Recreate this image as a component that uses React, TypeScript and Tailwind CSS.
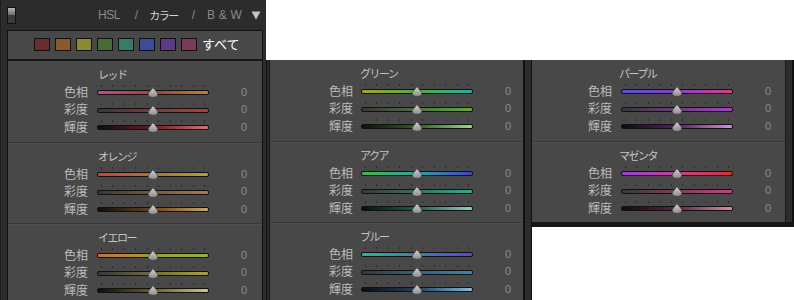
import React from "react";

type SliderDef = { label: string; grad: string };
type SectionDef = { name: string; sliders: SliderDef[] };

const S = {
  red: {
    name: "レッド",
    sliders: [
      { label: "色相", grad: "bg-[linear-gradient(90deg,#c24c92,#a83a40_50%,#b8862c)]" },
      { label: "彩度", grad: "bg-[linear-gradient(90deg,#383838,#b04040)]" },
      { label: "輝度", grad: "bg-[linear-gradient(90deg,#0e0e0e,#6e1c1c_50%,#d07474)]" },
    ],
  },
  orange: {
    name: "オレンジ",
    sliders: [
      { label: "色相", grad: "bg-[linear-gradient(90deg,#c44444,#b07232_50%,#a8a232)]" },
      { label: "彩度", grad: "bg-[linear-gradient(90deg,#383838,#b07a3a)]" },
      { label: "輝度", grad: "bg-[linear-gradient(90deg,#0e0e0e,#6a4418_50%,#cca474)]" },
    ],
  },
  yellow: {
    name: "イエロー",
    sliders: [
      { label: "色相", grad: "bg-[linear-gradient(90deg,#c47044,#a89a38_50%,#84b444)]" },
      { label: "彩度", grad: "bg-[linear-gradient(90deg,#383838,#a8a040)]" },
      { label: "輝度", grad: "bg-[linear-gradient(90deg,#0e0e0e,#6a6020_50%,#d0c880)]" },
    ],
  },
  green: {
    name: "グリーン",
    sliders: [
      { label: "色相", grad: "bg-[linear-gradient(90deg,#a4a232,#58a840_50%,#30aaa4)]" },
      { label: "彩度", grad: "bg-[linear-gradient(90deg,#383838,#62aa42)]" },
      { label: "輝度", grad: "bg-[linear-gradient(90deg,#0e0e0e,#2e6020_50%,#a4d484)]" },
    ],
  },
  aqua: {
    name: "アクア",
    sliders: [
      { label: "色相", grad: "bg-[linear-gradient(90deg,#4ab24a,#30a2a0_50%,#4444c4)]" },
      { label: "彩度", grad: "bg-[linear-gradient(90deg,#383838,#32aa92)]" },
      { label: "輝度", grad: "bg-[linear-gradient(90deg,#0e0e0e,#1e6052_50%,#84d4c4)]" },
    ],
  },
  blue: {
    name: "ブルー",
    sliders: [
      { label: "色相", grad: "bg-[linear-gradient(90deg,#32b292,#3282b2_50%,#6442d2)]" },
      { label: "彩度", grad: "bg-[linear-gradient(90deg,#383838,#328ab2)]" },
      { label: "輝度", grad: "bg-[linear-gradient(90deg,#0e0e0e,#1e4062_50%,#84bcdc)]" },
    ],
  },
  purple: {
    name: "パープル",
    sliders: [
      { label: "色相", grad: "bg-[linear-gradient(90deg,#5252d4,#8442c4_50%,#d44284)]" },
      { label: "彩度", grad: "bg-[linear-gradient(90deg,#383838,#a442c4)]" },
      { label: "輝度", grad: "bg-[linear-gradient(90deg,#0e0e0e,#522262_50%,#cc94dc)]" },
    ],
  },
  magenta: {
    name: "マゼンタ",
    sliders: [
      { label: "色相", grad: "bg-[linear-gradient(90deg,#9442d4,#c44292_50%,#d43232)]" },
      { label: "彩度", grad: "bg-[linear-gradient(90deg,#383838,#c44284)]" },
      { label: "輝度", grad: "bg-[linear-gradient(90deg,#0e0e0e,#622242_50%,#dc8cac)]" },
    ],
  },
} satisfies Record<string, SectionDef>;

type PanelCfg = { labelW: string; gap: string; titlePad: string };

const jp = "font-['Noto_Sans_CJK_JP','Noto_Sans',sans-serif]";

function Thumb() {
  return (
    <svg width="12" height="11" viewBox="0 0 12 11" className="absolute top-[3px] left-[50px]">
      <defs>
        <linearGradient id="tg" x1="0" y1="0" x2="0" y2="1">
          <stop offset="0" stopColor="#d4d4d4" />
          <stop offset="1" stopColor="#8a8a8a" />
        </linearGradient>
      </defs>
      <path
        d="M6 0.6 L10.4 6 C11.4 7.8 10.2 10.4 6 10.4 C1.8 10.4 0.6 7.8 1.6 6 Z"
        fill="url(#tg)"
        stroke="#3a3a3a"
        strokeWidth="0.7"
      />
    </svg>
  );
}

function Slider({ grad, gap }: { grad: string; gap: string }) {
  const ticks = Array.from({ length: 10 });
  return (
    <div className={`relative w-[112px] h-[15px] shrink-0 ${gap}`}>
      <div className="absolute top-[1px] left-[4px] right-[4px] flex justify-between">
        {ticks.map((_, i) => (
          <div key={i} className="w-px h-[2px] bg-[#2a2a2a]" />
        ))}
      </div>
      <div className={`absolute top-[6px] left-0 right-0 h-[5px] rounded-[2px] border border-[#111] ${grad}`} />
      <Thumb />
    </div>
  );
}

function Section({ def, cfg, first }: { def: SectionDef; cfg: PanelCfg; first?: boolean }) {
  return (
    <div
      className={`h-[81px] pt-[6px] shrink-0 ${first ? "" : "border-t border-[#383838] shadow-[inset_0_1px_0_#4f4f4f]"}`}
    >
      <div className={`h-[14px] leading-[14px] text-[11px] tracking-[-1.5px] whitespace-nowrap text-[#c4c4c4] ${jp} ${cfg.titlePad}`}>
        {def.name}
      </div>
      <div className="mt-[2px]">
        {def.sliders.map((s) => (
          <div key={s.label} className="flex items-center h-[17.5px]">
            <div className={`${cfg.labelW} shrink-0 text-right text-[12px] leading-[14px] text-[#bcbcbc] ${jp}`}>{s.label}</div>
            <Slider grad={s.grad} gap={cfg.gap} />
            <div className="w-[38px] shrink-0 text-right text-[11px] leading-[14px] text-[#8c8c8c] font-['Liberation_Sans',sans-serif]">
              0
            </div>
          </div>
        ))}
      </div>
    </div>
  );
}

const swatches = ["#6a2e30", "#8a5a2c", "#8a8a2e", "#4a6a38", "#3a7a68", "#3c4c98", "#5c3a8a", "#7a3a58"];

export default function App() {
  const p1: PanelCfg = { labelW: "w-[80px]", gap: "ml-[9px]", titlePad: "pl-[90px]" };
  const p2: PanelCfg = { labelW: "w-[83px]", gap: "ml-[8px]", titlePad: "pl-[90px]" };
  const p3: PanelCfg = { labelW: "w-[80px]", gap: "ml-[9px]", titlePad: "pl-[87px]" };

  return (
    <div className="w-[794px] h-[300px] bg-white flex overflow-hidden">
      {/* Panel 1 */}
      <div className="w-[266px] shrink-0 h-[300px] bg-[#2c2c2c] pl-[6px] pr-[3px] flex flex-col border-l border-[#1c1c1c]">
        <div className="h-[30px] flex items-center shrink-0">
          <div className="w-[9px] h-[17px] shrink-0 border border-[#111] flex flex-col">
            <div className="flex-1 bg-[linear-gradient(180deg,#b4b4b4,#6c6c6c)]" />
            <div className="flex-1 bg-[#3a3a3a]" />
          </div>
          <div className="ml-[82px] flex items-center whitespace-nowrap shrink-0 text-[12px] font-['Liberation_Sans',sans-serif] text-[#8a8a8a]">
            <span className="tracking-[-0.5px]">HSL</span>
            <span className="ml-[15px]">/</span>
            <span className={`ml-[11px] text-[11px] text-[#d6d6d6] tracking-[-1.5px] ${jp}`}>カラー</span>
            <span className="ml-[14px]">/</span>
            <span className="ml-[12px] tracking-[0.2px]">B &amp; W</span>
            <svg width="10" height="9" viewBox="0 0 10 9" className="ml-[9px] mt-[1px]">
              <path d="M0.5 0.5 H9.5 L5 8.5 Z" fill="#c4c4c4" />
            </svg>
          </div>
        </div>
        <div className="flex-1 border-x border-t border-[#111] bg-[#484848] flex flex-col">
          <div className="h-[30px] shrink-0 border-b-2 border-[#151515] flex items-center pl-[26px] pb-[2px]">
            {swatches.map((c) => (
              <div key={c} className="w-[16px] h-[13px] shrink-0 border border-[#111] mr-[5px]" style={{ backgroundColor: c }} />
            ))}
            <span className={`text-[13px] text-white ${jp}`}>すべて</span>
          </div>
          <Section def={S.red} cfg={p1} first />
          <Section def={S.orange} cfg={p1} />
          <Section def={S.yellow} cfg={p1} />
        </div>
      </div>

      {/* Panel 2 */}
      <div className="mt-[60px] w-[266px] shrink-0 h-[240px] bg-[#2c2c2c] pl-[2px] border-l border-[#111] flex">
        <div className="w-[256px] bg-[#484848] border-l border-[#161616] border-r-2 border-r-[#111] flex flex-col">
          <Section def={S.green} cfg={p2} first />
          <Section def={S.aqua} cfg={p2} />
          <Section def={S.blue} cfg={p2} />
        </div>
        <div className="flex-1 border-r border-[#111]" />
      </div>

      {/* Panel 3 */}
      <div className="mt-[60px] w-[262px] shrink-0 h-[167px] bg-[#2c2c2c] flex flex-col">
        <div className="flex h-[162px]">
          <div className="w-[254px] bg-[#484848] border-r border-[#1a1a1a] flex flex-col">
            <Section def={S.purple} cfg={p3} first />
            <Section def={S.magenta} cfg={p3} />
          </div>
          <div className="flex-1 border-r-2 border-[#111]" />
        </div>
        <div className="h-[5px] bg-[#151515]" />
      </div>
    </div>
  );
}
